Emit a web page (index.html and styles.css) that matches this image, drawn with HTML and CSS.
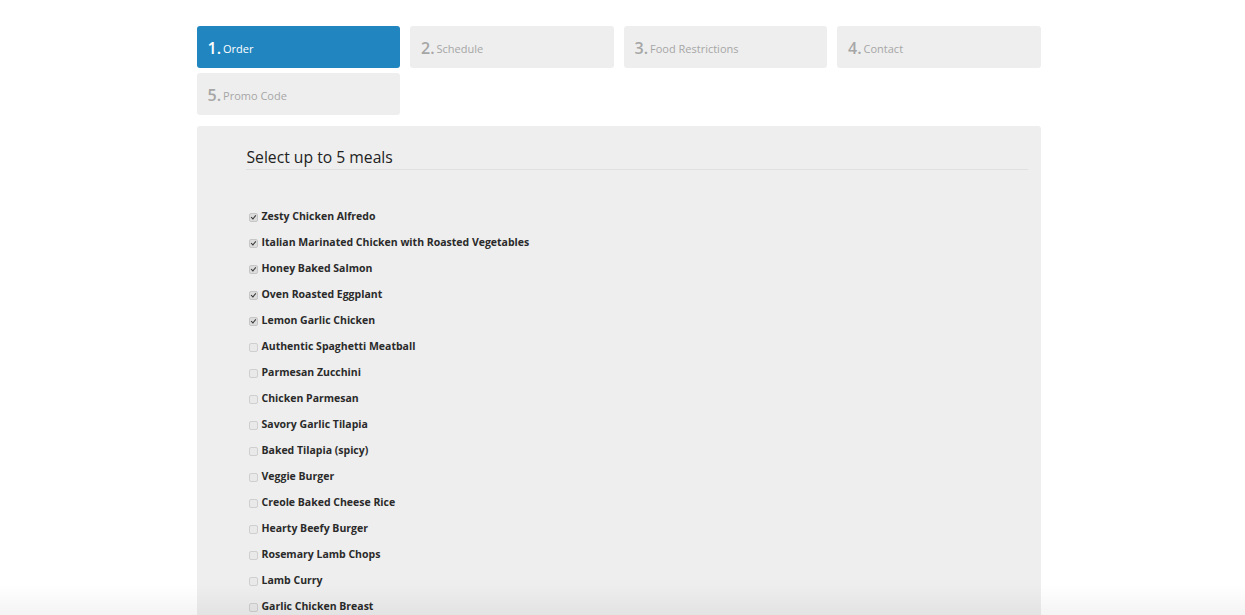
FILE: index.html
```html
<!DOCTYPE html>
<html>
<head>
<meta charset="utf-8">
<link rel="stylesheet" href="styles.css">
</head>
<body>
<div class="wrap">
  <div class="steps">
    <div class="step active"><span class="num">1.</span> Order</div>
    <div class="step"><span class="num">2.</span> Schedule</div>
    <div class="step"><span class="num">3.</span> Food Restrictions</div>
    <div class="step"><span class="num">4.</span> Contact</div>
    <div class="step"><span class="num">5.</span> Promo Code</div>
  </div>
  <div class="panel">
    <h2 class="title">Select up to 5 meals</h2>
    <ul class="meals">
      <li><span class="cb on"></span>Zesty Chicken Alfredo</li>
      <li><span class="cb on"></span>Italian Marinated Chicken with Roasted Vegetables</li>
      <li><span class="cb on"></span>Honey Baked Salmon</li>
      <li><span class="cb on"></span>Oven Roasted Eggplant</li>
      <li><span class="cb on"></span>Lemon Garlic Chicken</li>
      <li><span class="cb"></span>Authentic Spaghetti Meatball</li>
      <li><span class="cb"></span>Parmesan Zucchini</li>
      <li><span class="cb"></span>Chicken Parmesan</li>
      <li><span class="cb"></span>Savory Garlic Tilapia</li>
      <li><span class="cb"></span>Baked Tilapia (spicy)</li>
      <li><span class="cb"></span>Veggie Burger</li>
      <li><span class="cb"></span>Creole Baked Cheese Rice</li>
      <li><span class="cb"></span>Hearty Beefy Burger</li>
      <li><span class="cb"></span>Rosemary Lamb Chops</li>
      <li><span class="cb"></span>Lamb Curry</li>
      <li><span class="cb"></span>Garlic Chicken Breast</li>
    </ul>
  </div>
</div>
<div class="bottom-shade"></div>
</body>
</html>
```
FILE: styles.css
```css
html, body {
  margin: 0;
  padding: 0;
  background: #fff;
  font-family: "Open Sans", "Liberation Sans", sans-serif;
  overflow: hidden;
  height: 615px;
}
.wrap {
  width: 844px;
  margin: 0 auto;
  padding-top: 26px;
  position: relative;
  left: -4px;
}
.steps {
  display: grid;
  grid-template-columns: repeat(4, 1fr);
  column-gap: 10px;
  row-gap: 5px;
}
.step {
  height: 42px;
  background: #eeeeee;
  border-radius: 3px;
  color: #a6a6a6;
  font-size: 11px;
  display: flex;
  align-items: center;
  padding-left: 11px;
  padding-top: 2px;
  box-sizing: border-box;
}
.step .num {
  font-size: 16px;
  font-weight: 600;
  margin-right: 2px;
}
.step.active {
  background: #2185c0;
  color: #fff;
}
.panel {
  margin-top: 11px;
  background: #eeeeee;
  border-radius: 3px 3px 0 0;
  padding: 20px 13px 0 49px;
  height: 469px;
  overflow: hidden;
}
.title {
  margin: 0;
  padding-left: 1px;
  font-size: 15.7px;
  font-weight: 400;
  color: #222;
  line-height: 22px;
  padding-bottom: 1px;
  border-bottom: 1px solid #e0e0e0;
}
.meals {
  list-style: none;
  margin: 0;
  padding: 33px 0 0 3px;
}
.meals li {
  display: flex;
  align-items: center;
  height: 26px;
  font-size: 10.5px;
  font-weight: 700;
  color: #2a2a2a;
}
.cb {
  width: 7px;
  height: 7px;
  border: 1px solid #cfcfcf;
  border-radius: 2px;
  background: #e9e9e9;
  margin-right: 4px;
  margin-top: 2px;
  position: relative;
  flex: none;
}
.cb.on {
  background: #dcdcdc;
  border-color: #c6c6c6;
}
.cb.on::after {
  content: "";
  position: absolute;
  left: 2px;
  top: 0.5px;
  width: 1.5px;
  height: 4px;
  border: solid #333;
  border-width: 0 1.2px 1.2px 0;
  transform: rotate(40deg);
}
.bottom-shade {
  position: fixed;
  left: 0;
  right: 0;
  bottom: 0;
  height: 30px;
  background: linear-gradient(to bottom, rgba(0,0,0,0), rgba(0,0,0,0.045));
  pointer-events: none;
}
```
